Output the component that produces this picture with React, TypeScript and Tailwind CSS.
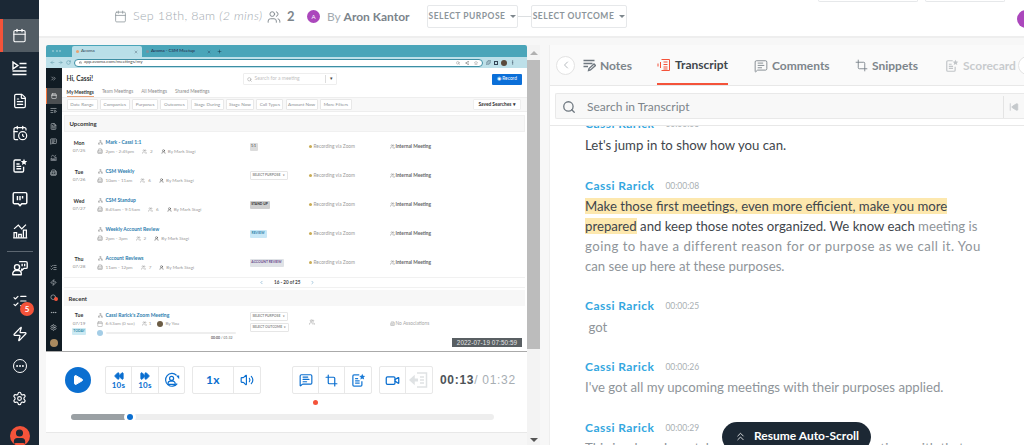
import React from "react";
import {
  Calendar, ListVideo, FileText, CalendarClock, ListChecks, Zap, Ellipsis, Settings, User, UserRound,
  Users, ChevronLeft, ChevronRight, ChevronsUp, ChevronsRight, Search, Crop, MessageSquareText, Video,
  Rewind, FastForward, Play, Volume2, SkipBack, ArrowLeft, ArrowRight, RotateCw, Lock, Star, Share2, Plus, X, EllipsisVertical, Puzzle, Building2, Network,
} from "lucide-react";

const font = { fontFamily: "Lato, 'Liberation Sans', sans-serif" };

function NoteStar({ size = 18, color = "currentColor", fill = "none" }: { size?: number; color?: string; fill?: string }) {
  return (
    <svg width={size} height={size} viewBox="0 0 20 20" fill="none" stroke={color} strokeWidth="1.7">
      <path d="M11 2.5H4a1.5 1.5 0 0 0-1.5 1.5v12A1.5 1.5 0 0 0 4 17.5h9a1.5 1.5 0 0 0 1.5-1.5v-5" />
      <path d="M5.5 7.5h4M5.5 10.5h6M5.5 13.5h6" />
      <path d="M15 1l1.2 2.6 2.8.3-2.1 1.9.6 2.8-2.5-1.4-2.5 1.4.6-2.8-2.1-1.9 2.8-.3z" fill={fill === "none" ? color : fill} stroke="none" />
    </svg>
  );
}

function PlaylistIcon() {
  return (
    <svg width="15" height="15" viewBox="0 0 15 15" fill="none" stroke="currentColor" strokeWidth="1.4">
      <path d="M1 1.2l4.800 3.300L1 7.800z" />
      <path d="M7.500 2.500H14.500M7.500 6.500H14.500M.5 10H14.500M.5 13.500H14.500" />
    </svg>
  );
}

function BoardIcon() {
  return (
    <svg width="20" height="20" viewBox="0 0 20 20" fill="none" stroke="currentColor" strokeWidth="1.7" strokeLinejoin="round">
      <path d="M3.5 2.5h13a1.5 1.5 0 0 1 1.5 1.5v10a1.5 1.5 0 0 1-1.5 1.5H12l-2 2.5-2-2.5H3.5A1.5 1.5 0 0 1 2 14V4a1.5 1.5 0 0 1 1.5-1.5z" />
      <path d="M7 6.5v5M10 6.5v5M13 6.5v3" />
    </svg>
  );
}

function ChartIcon() {
  return (
    <svg width="20" height="20" viewBox="0 0 20 20" fill="none" stroke="currentColor" strokeWidth="1.5">
      <path d="M2 18h16.5" />
      <path d="M3 18v-6h3v6M8.5 18v-4h3v4M14 18V9h3.5v9" />
      <path d="M3 7.5l5-4.5 4 4.5 5-5" />
    </svg>
  );
}

function CoachIcon() {
  return (
    <svg width="20" height="20" viewBox="0 0 20 20" fill="none" stroke="currentColor" strokeWidth="1.6" strokeLinejoin="round">
      <circle cx="6.5" cy="9" r="3" />
      <path d="M1.5 18v-1.5a3.5 3.5 0 0 1 3.5-3.5h3a3.5 3.5 0 0 1 3.5 3.5V18z" />
      <path d="M9 2.5h8A1.5 1.5 0 0 1 18.5 4v5A1.5 1.5 0 0 1 17 10.5h-2.5L12 13v-2.500" />
      <path d="M12.500 5v3M15.500 5v3" />
    </svg>
  );
}

function PersonRotate() {
  return (
    <svg width="20" height="20" viewBox="0 0 20 20" fill="none" stroke="#0b6fd0" strokeWidth="1.5">
      <path d="M16.500 14.500A8 8 0 1 1 15.500 4" />
      <circle cx="9.500" cy="8" r="2.500" />
      <path d="M5 15.500v-1a3 3 0 0 1 3-3h3a3 3 0 0 1 3 3v1z" />
      <path d="M15 4.500h4V9z" fill="#0b6fd0" stroke="none" />
    </svg>
  );
}

function TranscriptIcon() {
  return (
    <svg width="14" height="14" viewBox="0 0 14 14" fill="none" stroke="#f4533a" strokeWidth="1">
      <path d="M4.500 1.500h8v11h-8" />
      <path d="M6.500 4h4M6.500 6.500h4M6.500 9h4M6.500 11h4" />
      <path d="M3.500 4v6M1 5.500v3" />
    </svg>
  );
}

function NotesIcon() {
  return (
    <svg width="13" height="13" viewBox="0 0 13 13" fill="none" stroke="#6f7880" strokeWidth="1.300">
      <path d="M.5 1.500h11M.5 4.500h9M.5 7.500h4.500" />
      <path d="M5.500 11.500l.5-2 5-4.500 1.500 1.500-5 4.500z" />
    </svg>
  );
}

function DisabledNote() {
  return (
    <svg width="20" height="18" viewBox="0 0 20 18" fill="none" stroke="#dfe2e4" strokeWidth="1.500">
      <path d="M8 2h9.500v14H8" />
      <path d="M11 6h4M11 9h4M11 12h4" />
      <path d="M1 9l4-3.500v7z" fill="#dfe2e4" />
      <path d="M4 9h5" strokeWidth="3" />
    </svg>
  );
}

function SideItem({ children, active = false }: { children: React.ReactNode; active?: boolean }) {
  return (
    <div className={`relative flex h-[32.7px] w-full shrink-0 items-center justify-center text-white ${active ? "border-l-[3px] border-[#f4533a] bg-[#525c64] pr-[3px]" : ""}`}>
      {children}
    </div>
  );
}

function Sidebar() {
  return (
    <aside className="flex h-full w-[39px] shrink-0 flex-col items-center bg-[#1b2835] pt-[19px]">
      <SideItem active><Calendar size={15} strokeWidth={1.8} /></SideItem>
      <SideItem><PlaylistIcon /></SideItem>
      <SideItem><FileText size={16} strokeWidth={1.8} /></SideItem>
      <SideItem><CalendarClock size={16} strokeWidth={1.8} /></SideItem>
      <SideItem><NoteStar size={16} /></SideItem>
      <SideItem><span className="scale-[0.85]"><BoardIcon /></span></SideItem>
      <SideItem><span className="scale-[0.85]"><ChartIcon /></span></SideItem>
      <div className="mt-[3px] h-px w-[26px] shrink-0 bg-[#5c6670]" />
      <SideItem><span className="scale-[0.85]"><CoachIcon /></span></SideItem>
      <SideItem>
        <ListChecks size={16} strokeWidth={1.7} />
        <span className="absolute left-[20px] top-[17px] flex h-[14px] w-[14px] items-center justify-center rounded-full bg-[#f4533a] text-[8px] font-bold text-white">5</span>
      </SideItem>
      <SideItem><Zap size={16} strokeWidth={1.8} /></SideItem>
      <SideItem>
        <span className="flex h-[14px] w-[14px] items-center justify-center rounded-full border-[1.5px] border-white"><Ellipsis size={10} strokeWidth={2.5} /></span>
      </SideItem>
      <SideItem><Settings size={15} strokeWidth={1.8} /></SideItem>
      <div className="mt-[11px] flex h-[20px] w-[20px] shrink-0 items-center justify-center overflow-hidden rounded-full bg-[#f4533a]">
        <User size={17} fill="#1b2835" stroke="#1b2835" />
      </div>
    </aside>
  );
}

function TopBar() {
  return (
    <header className="relative flex h-[38px] shrink-0 items-center border-b-2 border-[#eeeeee] bg-white pb-[3px] pl-[75px] text-[#a3abb1]">
      <Calendar size={13} strokeWidth={1.5} className="shrink-0 text-[#8f979d]" />
      <span className="ml-[6px] w-[134px] shrink-0 whitespace-nowrap text-[12.5px] font-light tracking-[0.3px]">Sep 18th, 8am <i className="tracking-[0.4px]">(2 mins)</i></span>
      <Users size={14} strokeWidth={1.6} className="shrink-0 text-[#7d858b]" />
      <span className="ml-[6px] w-[20px] shrink-0 text-[13px] font-bold text-[#7d858b]">2</span>
      <span className="flex h-[13px] w-[13px] shrink-0 items-center justify-center rounded-full bg-[#ab47bc] text-[6px] text-white">A</span>
      <span className="ml-[7px] w-[100px] shrink-0 whitespace-nowrap text-[12px]">By <b className="font-bold text-[#7b848b]">Aron Kantor</b></span>
      <div className="flex h-[23px] w-[91px] shrink-0 items-center justify-center gap-[5px] whitespace-nowrap rounded-[2px] border border-[#e6e8ea] text-[8.5px] font-bold tracking-[0.5px] text-[#8c959b]">
        SELECT PURPOSE <span className="h-0 w-0 border-x-[3px] border-t-[3px] border-x-transparent border-t-[#7e878d]" />
      </div>
      <div className="h-px w-[13px] shrink-0 bg-[#dcdfe1]" />
      <div className="flex h-[23px] w-[96px] shrink-0 items-center justify-center gap-[5px] whitespace-nowrap rounded-[2px] border border-[#e6e8ea] text-[8.5px] font-bold tracking-[0.5px] text-[#8c959b]">
        SELECT OUTCOME <span className="h-0 w-0 border-x-[3px] border-t-[3px] border-x-transparent border-t-[#7e878d]" />
      </div>
      <div className="absolute left-[779px] top-0 h-[2px] w-[100px] rounded-b-[2px] border border-t-0 border-[#e6e8ea]" />
      <div className="absolute left-[886px] top-0 h-[2px] w-[80px] rounded-b-[2px] border border-t-0 border-[#e6e8ea]" />
      <div className="absolute left-[978px] top-[10px] h-[18px] w-[18px] rounded-full bg-[#ab47bc]" />
    </header>
  );
}

function Chip({ label, w }: { label: string; w: number }) {
  return (
    <span style={{ width: w }} className="flex h-[11px] shrink-0 items-center justify-center rounded-[1px] border border-[#e8e8e8] bg-white text-[4.6px] text-[#8b8f93]">
      {label}
    </span>
  );
}

function Tag({ kind }: { kind: string }) {
  if (kind === "select") {
    return (
      <span className="flex h-[9px] w-[38px] items-center justify-between whitespace-nowrap rounded-[1px] border border-[#e6e6e6] bg-white px-[2px] text-[3.4px] font-bold text-[#8c8c8c]">
        SELECT PURPOSE <span>▾</span>
      </span>
    );
  }
  const styles: Record<string, string> = {
    "1:1": "bg-[#dcdcdc] text-[#555] w-[8px]",
    "STAND UP": "bg-[#cfcfcf] text-[#333] w-[20px]",
    REVIEW: "bg-[#c9e8f7] text-[#2d7fa8] w-[17px]",
    "ACCOUNT REVIEW": "bg-[#dfe2e6] text-[#6a4a8c] w-[34px]",
  };
  return <span className={`flex h-[8px] items-center justify-center whitespace-nowrap rounded-[1px] text-[3.4px] font-bold ${styles[kind]}`}>{kind}</span>;
}

function MeetingRow({ day, date, name, time, people, tag }: { day?: string; date?: string; name: string; time: string; people: string; tag: string }) {
  return (
    <div className="flex h-[29px] shrink-0 items-center">
      <div className="w-[31px] text-center">
        <div className="text-[5.2px] font-bold leading-[8px] text-[#333]">{day}</div>
        <div className="text-[4.6px] leading-[7px] text-[#8e8e8e]">{date}</div>
      </div>
      <div className="w-[155px] pl-[2px]">
        <div className="flex items-center gap-[3px] pl-[1px] leading-[9px]">
          <Network size={5} className="text-[#9a9a9a]" />
          <span className="text-[5px] font-bold text-[#2b7cae]">{name}</span>
        </div>
        <div className="flex items-center gap-[2px] text-[4.600px] leading-[9px] text-[#9a9a9a]">
          <Building2 size={6} />
          <span className="ml-[1px]">{time}</span>
          <Users size={5} className="ml-[6px]" />
          <span className="ml-[1px]">{people}</span>
          <UserRound size={5} className="ml-[6px] text-[#333]" />
          <span>By Mark Stagi</span>
        </div>
      </div>
      <div className="w-[59px]"><Tag kind={tag} /></div>
      <div className="flex w-[81px] items-center gap-[2px] text-[4.800px] text-[#9a9a9a]">
        <span className="h-[3px] w-[3px] rounded-full bg-[#c9ac55]" /> Recording via Zoom
      </div>
      <div className="flex items-center gap-[1px] text-[4.800px] font-bold text-[#666]">
        <Users size={5} className="text-[#888]" /> Internal Meeting
      </div>
    </div>
  );
}

function MiniApp() {
  const chips: [string, number][] = [
    ["Date Range", 31], ["Companies", 30], ["Purposes", 26], ["Outcomes", 28], ["Stage During", 33], ["Stage Now", 28], ["Call Types", 27], ["Amount Now", 32], ["More Filters", 32],
  ];
  return (
    <div className="relative flex h-[307px] w-[481px] shrink-0 flex-col overflow-hidden rounded-t-[2px] border-b border-[#aaa] bg-white">
      <div className="flex h-[12px] shrink-0 items-end bg-[#4aa5b9]">
        <div className="flex w-[26px] items-center gap-[1.5px] self-center pl-[6px]">
          <span className="h-[2px] w-[2px] rounded-full bg-[#8cc7d3]" /><span className="h-[2px] w-[2px] rounded-full bg-[#8cc7d3]" /><span className="h-[2px] w-[2px] rounded-full bg-[#8cc7d3]" />
        </div>
        <div className="flex h-[11px] w-[70px] items-center justify-between rounded-t-[2px] bg-[#b9dfe8] px-[4px] text-[4.500px] text-[#345]">
          <span className="flex items-center gap-[2px]"><span className="h-[3px] w-[3px] rounded-full bg-[#e9a26f]" />Avoma</span><X size={4} />
        </div>
        <div className="flex h-[11px] w-[73px] items-center justify-between px-[4px] text-[4.500px] text-[#224]">
          <span className="flex items-center gap-[2px]"><span className="h-[3px] w-[3px] rounded-full bg-[#7d8f9c]" />Avoma - CSM Meetup</span><X size={4} />
        </div>
        <Plus size={5} className="mb-[3px] ml-[2px] text-[#123]" />
      </div>
      <div className="flex h-[11px] shrink-0 items-center gap-[3px] bg-[#bde0e9] px-[4px] text-[#4b8a9b]">
        <ArrowLeft size={5} /><ArrowRight size={5} /><RotateCw size={5} />
        <div className="flex h-[8px] w-[409px] items-center justify-between rounded-full border border-[#3d8ea3] bg-white px-[4px] text-[4.500px] text-[#444]">
          <span className="flex items-center gap-[2px]"><Lock size={3} />app.avoma.com/meetings/my</span>
          <span className="flex items-center gap-[5px] text-[#666]"><Search size={4} /><Share2 size={4} /><Star size={4} /></span>
        </div>
        <Puzzle size={5} className="text-[#345]" />
        <span className="h-[4px] w-[4px] border border-[#345]" />
        <span className="h-[6px] w-[6px] rounded-full bg-[#5a4a3c]" />
        <EllipsisVertical size={5} className="text-[#345]" />
      </div>
      <div className="flex min-h-0 flex-1">
        <div className="flex w-[15.500px] shrink-0 flex-col items-center bg-[#111c24] pt-[7px] text-[#c9ced2]">
          <ChevronsRight size={7} />
          <div className="mt-[6px] flex h-[16px] w-full items-center justify-center border-l border-[#f4733a] bg-[#4b4f52] text-white"><Calendar size={6} /></div>
          <div className="mt-[3px] flex flex-col items-center gap-[8.500px]">
            <ListVideo size={7} /><FileText size={7} /><MessageSquareText size={7} /><ChartSmall /><Building2 size={7} />
          </div>
          <div className="mb-[4px] mt-auto flex flex-col items-center gap-[8px]">
            <ListChecks size={7} />
            <Zap size={7} />
            <span className="relative"><Search size={7} /><span className="absolute left-[4px] top-[3px] h-[4px] w-[4px] rounded-full bg-[#f4533a]" /></span>
            <Ellipsis size={7} />
            <Settings size={7} />
            <span className="h-[8px] w-[8px] rounded-full bg-[#a98a5f]" />
          </div>
        </div>
        <div className="relative flex min-w-0 flex-1 flex-col text-[#333]">
          <div className="flex h-[19px] shrink-0 items-center px-[5px] pt-[3px]">
            <span className="w-[176px] text-[6.500px] font-bold">Hi, Cassi!</span>
            <div className="flex h-[12px] w-[94px] items-center justify-between rounded-[1px] border border-[#eee] px-[3px] text-[5px] text-[#c2c2c2]">
              <span className="flex items-center gap-[3px]"><Search size={5} className="text-[#888]" />Search for a meeting</span>
              <span className="border-l border-[#ddd] pl-[4px] text-[#444]">▾</span>
            </div>
            <div className="ml-auto flex h-[11px] w-[30px] items-center justify-center rounded-[1px] bg-[#0b6fd8] text-[4.800px] text-white">◉ Record</div>
          </div>
          <div className="flex h-[10px] shrink-0 items-center gap-[8px] pl-[5px] text-[4.700px] text-[#8e8e8e]">
            <span className="border-b border-[#e8a27a] font-bold leading-[8px] text-[#333]">My Meetings</span>
            <span>Team Meetings</span><span>All Meetings</span><span>Shared Meetings</span>
          </div>
          <div className="flex h-[15px] shrink-0 items-center gap-[2.300px] border-y border-[#eeeeee] bg-[#f8f8f8] pl-[5px] pr-[6px]">
            {chips.map(([l, w]) => <Chip key={l} label={l} w={w} />)}
            <span className="ml-auto flex h-[11px] w-[48px] items-center justify-center gap-[2px] rounded-[1px] border border-[#eee] bg-white text-[4.800px] font-bold text-[#333]">Saved Searches ▾</span>
          </div>
          <div className="mx-[2px] mt-[3px] flex h-[17px] shrink-0 items-center border border-[#f0f0f0] bg-[#f7f7f7] pl-[5px] text-[6px] font-bold">Upcoming</div>
          <div className="ml-[2px]">
            <MeetingRow day="Mon" date="07/25" name="Mark - Cassi 1:1" time="2pm - 2:45pm" people="2" tag="1:1" />
            <MeetingRow day="Tue" date="07/26" name="CSM Weekly" time="10am - 11am" people="6" tag="select" />
            <MeetingRow day="Wed" date="07/27" name="CSM Standup" time="8:45am - 9:15am" people="6" tag="STAND UP" />
            <MeetingRow name="Weekly Account Review" time="2pm - 3pm" people="2" tag="REVIEW" />
            <MeetingRow day="Thu" date="07/28" name="Account Reviews" time="11am - 12pm" people="7" tag="ACCOUNT REVIEW" />
          </div>
          <div className="mx-[2px] flex h-[11px] shrink-0 items-center justify-center gap-[10px] border-y border-[#f1f1f1] pr-[14px] text-[4.600px] font-bold text-[#444]">
            <ChevronLeft size={5} className="text-[#2b7cae]" /> 16 - 20 of 25 <ChevronRight size={5} className="text-[#2b7cae]" />
          </div>
          <div className="mx-[2px] mt-[2px] flex h-[16px] shrink-0 items-center bg-[#f7f7f7] pl-[5px] text-[6px] font-bold">Recent</div>
          <div className="ml-[2px] flex h-[46px] shrink-0 items-start pt-[5px]">
            <div className="w-[31px] text-center">
              <div className="text-[5.200px] font-bold leading-[8px] text-[#333]">Tue</div>
              <div className="text-[4.600px] leading-[8px] text-[#8e8e8e]">07/19</div>
              <span className="mx-auto mt-[1px] block h-[7px] w-[14px] rounded-[1px] bg-[#cdeaf3] text-[3.400px] font-bold leading-[7px] text-[#2d8aa8]">TODAY</span>
            </div>
            <div className="w-[155px] pl-[2px]">
              <div className="flex items-center gap-[3px] pl-[1px] leading-[8px]">
                <Network size={5} className="text-[#9a9a9a]" />
                <span className="text-[5px] font-bold text-[#2b7cae]">Cassi Rarick's Zoom Meeting</span>
              </div>
              <div className="flex items-center gap-[2px] text-[4.600px] leading-[9px] text-[#9a9a9a]">
                <Calendar size={6} /><span className="ml-[1px]">6:53am (0 sec)</span>
                <Users size={5} className="ml-[5px]" /><span>1</span>
                <span className="ml-[4px] h-[6px] w-[6px] rounded-full bg-[#6b5c45]" /><span>By You</span>
              </div>
              <div className="mt-[2px] flex items-center gap-[3px]">
                <span className="h-[6px] w-[6px] rounded-full bg-[#a4cde6]" />
                <span className="h-[2px] w-[130px] rounded-full bg-[#eeeeee]" />
              </div>
              <div className="w-[136px] text-right text-[3.500px] text-[#666]"><b>00:00</b> / 01:32</div>
            </div>
            <div className="flex w-[59px] flex-col gap-[2px] pt-[1px]">
              <Tag kind="select" />
              <span className="flex h-[9px] w-[39px] items-center justify-between whitespace-nowrap rounded-[1px] border border-[#e6e6e6] bg-white px-[2px] text-[3.400px] font-bold text-[#8c8c8c]">SELECT OUTCOME <span>▾</span></span>
            </div>
            <div className="w-[81px] pt-[8px]"><Users size={6} className="text-[#999]" /></div>
            <div className="flex items-center gap-[1px] pt-[9px] text-[4.800px] text-[#a6a6a6]"><Building2 size={5} /> No Associations</div>
          </div>
          <div className="absolute bottom-[4px] right-[5px] flex h-[9px] w-[70px] items-center justify-center whitespace-nowrap bg-[#595f63] font-['Liberation_Sans',sans-serif] text-[6.300px] tracking-[0.1px] text-[#e6e6e6]">2022-07-19 07:50:59</div>
        </div>
      </div>
    </div>
  );
}

function ChartSmall() {
  return <span className="block h-[7px] w-[7px] origin-top-left scale-[0.35]"><ChartIcon /></span>;
}

function Group({ children, cls = "" }: { children: React.ReactNode; cls?: string }) {
  return <div className={`flex h-[28px] shrink-0 divide-x divide-[#e8e8e8] rounded-[2px] border border-[#e8e8e8] text-[#0b6fd0] ${cls}`}>{children}</div>;
}

function Cell({ children, w }: { children: React.ReactNode; w: number }) {
  return <div style={{ width: w }} className="flex flex-col items-center justify-center">{children}</div>;
}

function Controls() {
  return (
    <div className="flex h-[81px] shrink-0 flex-col border-b border-[#e8e8e8] bg-white">
      <div className="relative flex items-center pl-[19px] pt-[14px]">
        <div className="flex h-[26px] w-[26px] shrink-0 items-center justify-center rounded-full bg-[#0b6fd0]"><Play size={12} fill="white" stroke="white" /></div>
        <Group cls="ml-[14px]">
          <Cell w={26}><Rewind size={10} fill="#0b6fd0" /><span className="text-[8px] font-bold leading-[9px] tracking-[0.3px]">10s</span></Cell>
          <Cell w={27}><FastForward size={10} fill="#0b6fd0" /><span className="text-[8px] font-bold leading-[9px] tracking-[0.3px]">10s</span></Cell>
          <Cell w={25}><span className="scale-[0.8]"><PersonRotate /></span></Cell>
        </Group>
        <Group cls="ml-[7px]">
          <Cell w={41}><span className="text-[12px] font-bold tracking-[0.4px]">1x</span></Cell>
          <Cell w={26}><Volume2 size={14} /></Cell>
        </Group>
        <Group cls="ml-[31px]">
          <Cell w={26}><MessageSquareText size={14} /></Cell>
          <Cell w={26}><Crop size={13} strokeWidth={2.200} /></Cell>
          <Cell w={26}><NoteStar size={15} color="#1b7bd6" /></Cell>
        </Group>
        <Group cls="ml-[7px]">
          <Cell w={26}><Video size={15} /></Cell>
          <Cell w={26}><DisabledNote /></Cell>
        </Group>
        <span className="ml-[7px] whitespace-nowrap font-['Liberation_Sans',sans-serif] text-[12px] font-bold tracking-[0.7px] text-[#4d5358]">00:13<span className="font-normal text-[#a7aeb3]">/ 01:32</span></span>
        <span className="absolute left-[267px] top-[48px] h-[5px] w-[5px] rounded-full bg-[#f4533a]" />
      </div>
      <div className="relative ml-[25px] mt-[20px] flex h-[6px] w-[423px] rounded-full bg-[#eeeeee]">
        <div className="h-full w-[58px] rounded-l-full bg-[#9aa0a4]" />
        <span className="absolute left-[53px] top-[-3px] flex h-[12px] w-[12px] items-center justify-center rounded-full bg-white">
          <span className="h-[6px] w-[6px] rounded-full bg-[#0b6fd0]" />
        </span>
      </div>
    </div>
  );
}

function Scrollbar() {
  return (
    <div className="flex w-[13px] shrink-0 flex-col items-center bg-[#f3f3f3]">
      <div className="flex h-[15px] shrink-0 items-center justify-center">
        <span className="h-0 w-0 border-x-[4px] border-b-[4px] border-x-transparent border-b-[#b0b0b0]" />
      </div>
      <div className="h-[289px] w-full shrink-0 bg-[#bcbcbc]" />
      <div className="mt-auto flex h-[10px] items-center justify-center">
        <span className="h-0 w-0 border-x-[4px] border-t-[4px] border-x-transparent border-t-[#555]" />
      </div>
    </div>
  );
}

function Tab({ icon, label, active = false, w, faded = false }: { icon: React.ReactNode; label: string; active?: boolean; w: number; faded?: boolean }) {
  return (
    <div style={{ width: w }} className="relative flex h-full shrink-0 items-center">
      <div className={`flex h-full items-center gap-[4px] pt-[1px] ${active ? "border-b-2 border-[#f4533a]" : ""} ${faded ? "opacity-40" : ""}`}>
        {icon}
        <span className={`whitespace-nowrap text-[12px] font-bold ${active ? "text-[#3f464c]" : "text-[#7d858b]"}`}>{label}</span>
      </div>
    </div>
  );
}

function Speaker({ time }: { time: string }) {
  return (
    <div className="flex h-[20px] items-center gap-[11px]">
      <span className="text-[12px] font-bold tracking-[0.45px] text-[#35a7e0]">Cassi Rarick</span>
      <span className="text-[8.500px] text-[#a9afb3]">{time}</span>
    </div>
  );
}

function RightPanel() {
  return (
    <section className="relative flex h-full min-w-0 flex-1 flex-col overflow-hidden border-l border-[#eeeeee] bg-white">
      <div className="flex h-[41px] shrink-0 items-center overflow-hidden border-b border-[#e8e8e8] bg-[#fafafa] pl-[6px]">
        <span className="mr-[8px] flex h-[19px] w-[19px] shrink-0 items-center justify-center rounded-full border border-[#e3e3e3] bg-white text-[#b6bbbf]"><ChevronLeft size={12} /></span>
        <Tab icon={<NotesIcon />} label="Notes" w={74} />
        <Tab icon={<TranscriptIcon />} label="Transcript" w={97} active />
        <Tab icon={<MessageSquareText size={14} strokeWidth={1.4} className="text-[#6f7880]" />} label="Comments" w={101} />
        <Tab icon={<Crop size={13} strokeWidth={1.5} className="text-[#6f7880]" />} label="Snippets" w={90} />
        <Tab icon={<NoteStar size={14} color="#6f7880" />} label="Scorecard" w={73} faded />
        <span className="h-[19px] w-[19px] shrink-0 rounded-full border border-[#e3e3e3] bg-white" />
      </div>
      <div className="flex h-[40px] shrink-0 items-center border-b border-[#e8e8e8] pl-[5px]">
        <div className="flex h-[26px] flex-1 items-center rounded-l-[2px] border border-r-0 border-[#e9e9e9] bg-[#f8f8f8] pl-[6px] pt-[2px]">
          <Search size={14} strokeWidth={2.200} className="text-[#6f7880]" />
          <span className="ml-[11px] text-[12px] text-[#7d858b]">Search in Transcript</span>
          <span className="ml-auto flex h-full w-[21px] items-center justify-center border-l border-[#e4e4e4] text-[#c5c9cc]"><SkipBack size={10} fill="#c5c9cc" /></span>
        </div>
      </div>
      <div className="min-h-0 flex-1 overflow-hidden pl-[35px] pr-[30px] text-[13.200px] leading-[20px] text-[#8f959a]">
        <div className="-mt-[12px]"><Speaker time="00:00:03" /></div>
        <p className="mt-[1px] text-[#3f464c]">Let's jump in to show how you can.</p>
        <div className="mt-[21px]"><Speaker time="00:00:08" /></div>
        <p>
          <span className="bg-[#fde8ae] text-[#3f464c]">Make those first meetings, even more efficient, make you more</span>{" "}
          <br />
          <span className="bg-[#fde8ae] text-[#3f464c]">prepared</span>
          <span className="text-[#3f464c]"> and keep those notes organized. We know each</span> meeting is
          <br />
          <span className="tracking-[0.45px]">going to have a different reason for or purpose as we call it. You</span>
          <br />
          can see up here at these purposes.
        </p>
        <div className="mt-[20px]"><Speaker time="00:00:25" /></div>
        <p className="mt-[1px]">&nbsp;got</p>
        <div className="mt-[20px]"><Speaker time="00:00:26" /></div>
        <p>I've got all my upcoming meetings with their purposes applied.</p>
        <div className="mt-[21px]"><Speaker time="00:00:29" /></div>
        <p>This is where I can take a look at my upcoming meetings with that</p>
      </div>
      <div className="absolute left-[172px] top-[377px] flex h-[30px] w-[149px] items-start justify-center gap-[7px] rounded-full bg-[#1c2834] pt-[5px] text-[12px] font-bold leading-[18px] text-white">
        <ChevronsUp size={13} strokeWidth={1.500} className="mt-[3px]" />Resume Auto-Scroll
      </div>
    </section>
  );
}

export default function App() {
  return (
    <div style={font} className="flex h-[445px] w-[1024px] overflow-hidden bg-[#f7f7f7]">
      <Sidebar />
      <main className="flex min-w-0 flex-1 flex-col">
        <TopBar />
        <div className="flex min-h-0 flex-1 pl-[7px] pt-[7px]">
          <div className="flex w-[494px] shrink-0">
            <div className="flex w-[481px] shrink-0 flex-col">
              <MiniApp />
              <Controls />
            </div>
            <Scrollbar />
          </div>
          <div className="w-[9px] shrink-0" />
          <RightPanel />
        </div>
      </main>
    </div>
  );
}
